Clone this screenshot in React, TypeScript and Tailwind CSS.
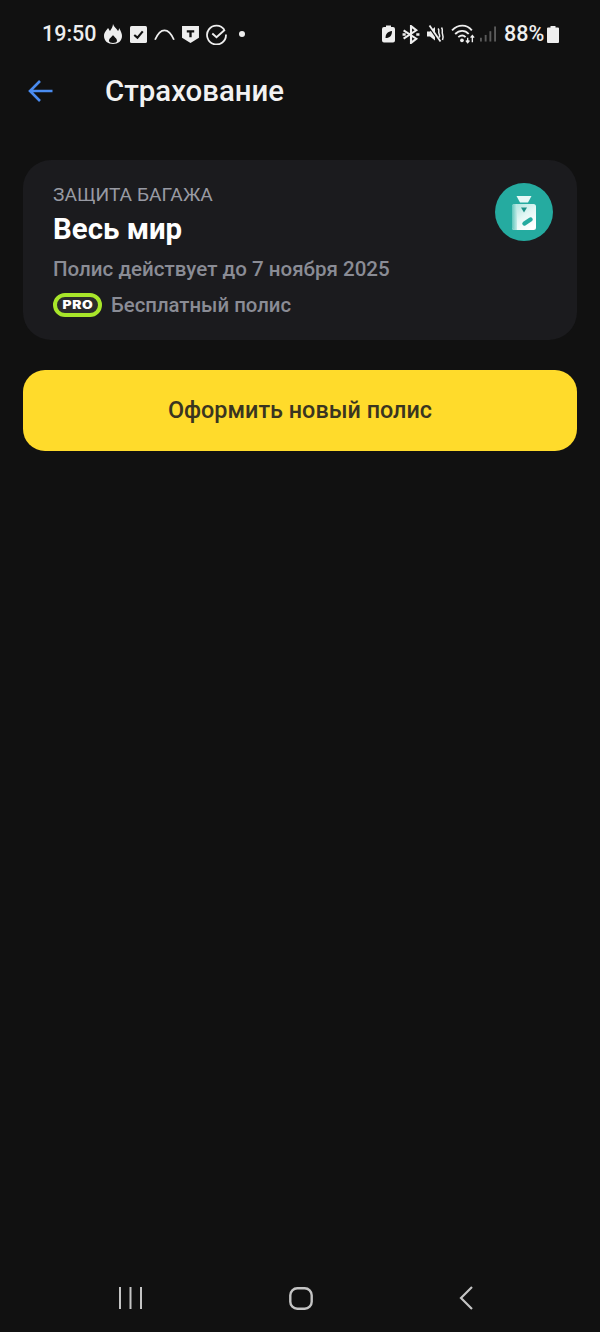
import React from "react";

const font = { fontFamily: "Roboto, sans-serif" };

function StatusLeft() {
  return (
    <div className="flex items-center">
      <span className="text-[21.5px] leading-none font-medium text-[#eeeeee] w-[61px]">19:50</span>
      <svg width="20" height="22" viewBox="0 0 20 22"><path fill="#eee" fillRule="evenodd" d="M10 1c1 3 3 4 5 7 1-1 1-2 1-3 2 3 3 6 3 8 0 5-4 8-9 8s-9-3-9-8c0-4 3-6 4-8 1 1 1 2 2 3 1-2 3-4 3-7Zm0 11c-1 2-4 3-4 6 0 1 2 2 4 2s4-1 4-2c0-3-3-4-4-6Z" /></svg>
      <svg width="17" height="17" viewBox="0 0 16 16" className="ml-[7px]"><rect width="16" height="16" rx="1.500" fill="#eee" /><path d="M4 8.500 7 11l5-6" stroke="#111" strokeWidth="2" fill="none" /></svg>
      <svg width="21" height="13" viewBox="0 0 20 12" className="ml-[7px]"><path d="M1 11C4 4 7 2 10 2s6 2 9 9" stroke="#eee" strokeWidth="1.700" fill="none" /></svg>
      <svg width="17" height="18" viewBox="0 0 16 17" className="ml-[7px]"><path d="M0 1h16v11l-8 5-8-5Z" fill="#eee" /><path d="M4.500 5h7v2h-2.400v4.500H6.900V7H4.500Z" fill="#111" /></svg>
      <svg width="21" height="21" viewBox="0 0 20 20" className="ml-[7px]"><path d="M17.500 5.500A9 9 0 1 0 19 10" stroke="#eee" strokeWidth="1.700" fill="none" /><path d="m6 9 4 3.500 8-7" stroke="#eee" strokeWidth="1.800" fill="none" /></svg>
      <span className="ml-[12px] w-[6px] h-[6px] rounded-full bg-[#eeeeee]" />
    </div>
  );
}

function StatusRight() {
  return (
    <div className="flex items-center">
      <svg width="13" height="18" viewBox="0 0 13 17"><path d="M4 0h5v1.500h2a2 2 0 0 1 2 2V15a2 2 0 0 1-2 2H2a2 2 0 0 1-2-2V3.500a2 2 0 0 1 2-2h2Z" fill="#eee" /><path d="M3.500 12.500C3.500 8 6 6 10 5.500 10 10 8 12.500 3.500 12.500Z" fill="#111" /></svg>
      <svg width="18" height="19" viewBox="0 0 16 18" className="ml-[7px]"><path d="M1 5l12 8-5 4V1l5 4L1 13" stroke="#eee" strokeWidth="2" fill="none" /><path d="M0 9h3M13 9h3" stroke="#eee" strokeWidth="2.200" /></svg>
      <svg width="18" height="19" viewBox="0 0 18 18" className="ml-[7px]"><path d="M0 6h3l5-4.500V15L3 11H0Z" fill="#eee" /><path d="M1 0l11 16" stroke="#111" strokeWidth="1.500" /><path d="M2.500 0l11 16" stroke="#eee" strokeWidth="1.800" /><path d="M11 3c2 2 0 3 1 5s1 3 0 4M14.500 2c2 3 0 4 1 6.500s1 3.500 0 6" stroke="#eee" strokeWidth="1.500" fill="none" /></svg>
      <svg width="25" height="20" viewBox="0 0 24 19" className="ml-[6px]"><path d="M1 6c6-6 14-6 19 0M4 9.500c4-4 9.500-4 13 0M7 12.500c2.500-2 5-2 7 0" stroke="#eee" strokeWidth="1.800" fill="none" /><circle cx="10.500" cy="15.500" r="1.800" fill="#eee" /><path d="M16 13v4.500M14.300 15.800l1.700 2 1.700-2M20.500 17.500V11M18.800 13l1.700-2 1.700 2" stroke="#eee" strokeWidth="1.300" fill="none" /></svg>
      <svg width="16" height="18" viewBox="0 0 17 18" className="ml-[4px]"><g fill="#5a5a5a"><rect x="0" y="13" width="2" height="4" /><rect x="5" y="10" width="2" height="7" /><rect x="10" y="6" width="2" height="11" /><rect x="15" y="1" width="2" height="16" /></g></svg>
      <span className="ml-[8px] text-[21.500px] leading-none font-medium text-[#eeeeee] w-[43px]">88%</span>
      <svg width="12" height="17" viewBox="0 0 12 17"><path d="M3.500 0h5v1.500H11a1 1 0 0 1 1 1V16a1 1 0 0 1-1 1H1a1 1 0 0 1-1-1V2.500a1 1 0 0 1 1-1h2.500Z" fill="#eee" /></svg>
    </div>
  );
}

function BagIcon() {
  return (
    <div className="w-[58px] h-[58px] rounded-full bg-[#25aba0] flex items-center justify-center shrink-0">
      <svg width="24" height="34" viewBox="0 0 24 34" className="mt-[1px]">
        <defs>
          <linearGradient id="bagBody" x1="0" x2="0.7" y1="0" y2="1">
            <stop offset="0" stopColor="#a9e2dc" />
            <stop offset="0.55" stopColor="#e4f7f5" />
            <stop offset="1" stopColor="#ffffff" />
          </linearGradient>
          <linearGradient id="bagShade" x1="0" x2="1" y1="0" y2="0">
            <stop offset="0" stopColor="#5fc6bc" />
            <stop offset="1" stopColor="#c4ece8" />
          </linearGradient>
        </defs>
        <path d="M4.500 0h15l-3.500 6.500h-8Z" fill="#e6f8f6" />
        <path d="M2.500 8h19a2.500 2.500 0 0 1 2.500 2.500V31.500a2.500 2.500 0 0 1-2.500 2.500h-19a2.500 2.500 0 0 1-2.500-2.500V10.500A2.500 2.500 0 0 1 2.500 8Z" fill="url(#bagBody)" />
        <path d="M2.500 8H5v26H2.500A2.500 2.500 0 0 1 0 31.500V10.500A2.500 2.500 0 0 1 2.500 8Z" fill="url(#bagShade)" />
        <path d="M9 11.500h6L12 16.500Z" fill="#1c8f86" />
        <path d="M12.500 27.500l6-4" stroke="#25aba0" strokeWidth="4.500" strokeLinecap="round" />
      </svg>
    </div>
  );
}

export default function App() {
  return (
    <div className="w-[600px] h-[1332px] bg-[#111111] flex flex-col" style={font}>
      <div className="h-[68px] pl-[42px] pr-[41px] flex items-center justify-between">
        <StatusLeft />
        <StatusRight />
      </div>
      <div className="h-[46px] flex items-center pl-[28px]">
        <svg width="26" height="24" viewBox="0 0 26 24">
          <path d="M24.500 12H2M12 2 2 12l10 10" stroke="#4a8cf0" strokeWidth="2.600" fill="none" />
        </svg>
        <span className="ml-[51px] mt-[1px] text-[29.400px] leading-none font-medium text-[#f2f2f2]">Страхование</span>
      </div>
      <div className="px-[23px] pt-[46px] flex flex-col gap-[30px]">
        <div className="h-[180px] rounded-[28px] bg-[#1b1b1e] pl-[30px] pr-[24px] pt-[23px] flex justify-between">
          <div className="flex flex-col">
            <span className="text-[19.200px] leading-[24px] text-[#989aa3]">ЗАЩИТА БАГАЖА</span>
            <span className="mt-[5px] text-[29.400px] leading-[34px] font-bold text-white">Весь мир</span>
            <span className="mt-[10px] text-[20.550px] leading-[26px] font-medium text-[#8a8c95]">Полис действует до 7 ноября 2025</span>
            <div className="mt-[10px] flex items-center">
              <span className="w-[49px] h-[24px] rounded-full border-[4px] border-[#a8e62a] bg-[#2b2c2c] flex items-center justify-center">
                <span className="mt-[2px] text-[11.500px] leading-none font-black text-white tracking-[0.6px] scale-x-[1.2]" style={{ fontFamily: "Inter, sans-serif" }}>PRO</span>
              </span>
              <span className="ml-[9px] text-[20.350px] leading-[26px] font-medium text-[#8a8c95]">Бесплатный полис</span>
            </div>
          </div>
          <BagIcon />
        </div>
        <div className="h-[81px] pt-[1px] rounded-[22px] bg-[#ffdb2b] flex items-center justify-center text-[23.400px] font-medium text-[#3a3520]">
          Оформить новый полис
        </div>
      </div>
      <div className="mt-auto h-[68px] flex items-center justify-between pl-[119px] pr-[127px]">
        <svg width="23" height="22" viewBox="0 0 23 22"><path d="M1 0v22M11.500 0v22M22 0v22" stroke="#c4c4c4" strokeWidth="2" /></svg>
        <svg width="24" height="23" viewBox="0 0 24 23"><rect x="1.300" y="1.300" width="21.400" height="20.400" rx="7" stroke="#c4c4c4" strokeWidth="2.400" fill="none" /></svg>
        <svg width="14" height="24" viewBox="0 0 14 24"><path d="M13 1 2 12l11 11" stroke="#c4c4c4" strokeWidth="2.200" fill="none" /></svg>
      </div>
    </div>
  );
}
